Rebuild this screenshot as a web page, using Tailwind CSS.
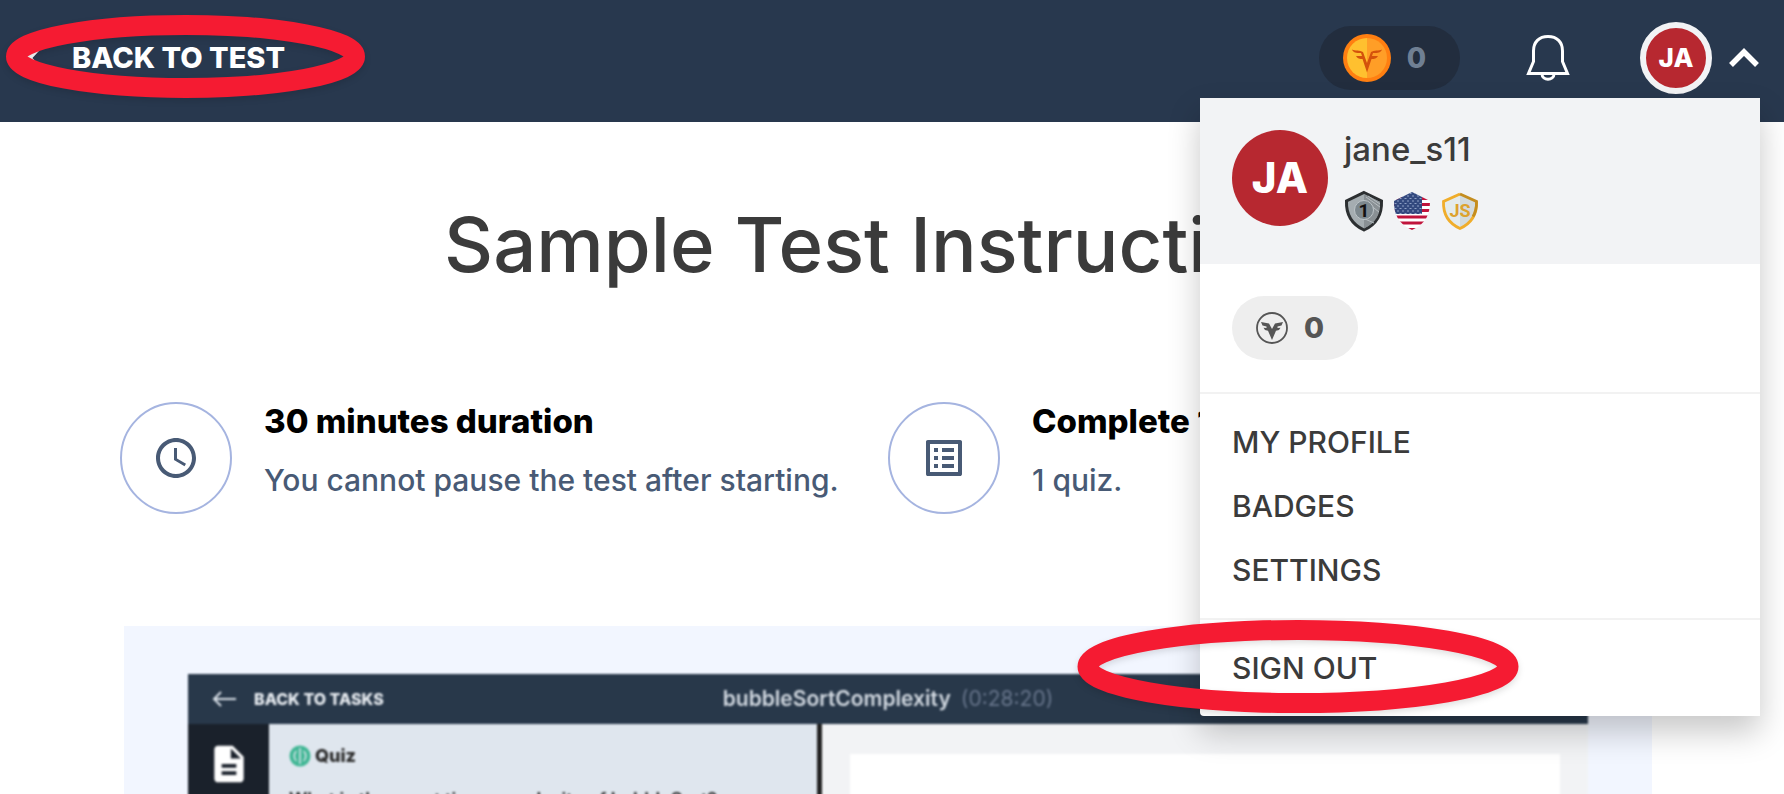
<!DOCTYPE html>
<html lang="en">
<head>
<meta charset="utf-8">
<title>Sample Test Instructions</title>
<script src="https://cdn.jsdelivr.net/npm/@tailwindcss/browser@4"></script>
</head>
<body class="relative h-screen overflow-hidden bg-white font-['Inter','Liberation_Sans',sans-serif] text-[#3b3b3b]">

<header class="relative bg-[#28384e] pb-1.5">
  <div class="flex h-29 items-center justify-between pl-6 pr-6">
    <a href="#" class="flex items-center gap-7 text-[29px] leading-8 font-extrabold text-white">
      <svg class="h-8 w-5" viewBox="0 0 20 32" fill="none" stroke="#fff" stroke-width="5"><path d="M17 3 5 16l12 13"/></svg>
      BACK TO TEST
    </a>
    <div class="flex items-center">
      <div class="flex h-16 items-center gap-4 rounded-full bg-[#222d3e] pl-6 pr-8.5">
        <svg class="size-12" viewBox="0 0 48 48">
          <circle cx="24" cy="24" r="24" fill="#ff7f11"/>
          <path d="M24 4a20 20 0 0 0 0 40z" fill="#ffc02f"/>
          <path d="M24 4a20 20 0 0 1 0 40z" fill="#ff9e27"/>
          <path d="M9 15.500C12 17 17 16 20 18l4 11 4-11c3-2 8-1 11-2.500-1 3-4 3.500-9 3.500l-1 3h6c-1 2.500-4 3-6.500 3L24 38.500 19.500 25c-2.500 0-5.500-.5-6.500-3h6l-1-3c-5 0-8-.5-9-3.500z" fill="#d4520c"/>
        </svg>
        <span class="text-[28px] leading-8 font-extrabold text-[#6f7f93]">0</span>
      </div>
      <button type="button" aria-label="Notifications" class="ml-16.5">
        <svg class="h-12 w-11" viewBox="0 0 44 48" fill="none" stroke="#fff" stroke-width="3"><path d="M7.500 27.500V17C7.500 8 13 2.500 22 2.500S36.500 8 36.500 17v10.500L41.500 39.500h-39zM16 40c0 7 12 7 12 0"/></svg>
      </button>
      <button type="button" aria-expanded="true" class="ml-17.5 flex items-center gap-4">
        <span class="flex size-18 items-center justify-center rounded-full border-6 border-[#f2f3f5] bg-[#b72830] text-[26px] leading-8 font-extrabold text-white">JA</span>
        <svg class="h-5 w-8" viewBox="0 0 32 20" fill="none" stroke="#fff" stroke-width="5.500"><path d="m3 17 13-13 13 13"/></svg>
      </button>
    </div>
  </div>
</header>

<main class="px-30">
  <h1 class="pt-19 text-center text-[76px] leading-[92px] font-medium">Sample Test Instructions</h1>

  <section class="mr-2 mt-28 grid grid-cols-2">
    <div class="flex gap-8">
      <div class="flex size-28 shrink-0 items-center justify-center rounded-full border-2 border-[#a5b4e0]">
        <svg class="size-12" viewBox="0 0 24 24" fill="#485a75"><path d="M11.990 2C6.470 2 2 6.480 2 12s4.470 10 9.990 10C17.520 22 22 17.520 22 12S17.520 2 11.990 2zM12 20c-4.420 0-8-3.580-8-8s3.580-8 8-8 8 3.580 8 8-3.580 8-8 8zm.5-13H11v6l5.250 3.150.75-1.230-4.500-2.670z"/></svg>
      </div>
      <div>
        <h2 class="text-[33px] leading-9.5 font-extrabold text-black">30 minutes duration</h2>
        <p class="mt-5 text-[30px] leading-10 font-medium text-[#485a75]">You cannot pause the test after starting.</p>
      </div>
    </div>
    <div class="flex gap-8">
      <div class="flex size-28 shrink-0 items-center justify-center rounded-full border-2 border-[#a5b4e0]">
        <svg class="size-12" viewBox="0 0 24 24" fill="#485a75"><path d="M19 5v14H5V5h14m1.100-2H3.900c-.5 0-.9.400-.9.900v16.200c0 .4.400.9.900.9h16.200c.4 0 .9-.5.900-.9V3.900c0-.5-.5-.9-.9-.9zM11 7h6v2h-6V7zm0 4h6v2h-6v-2zm0 4h6v2h-6zM7 7h2v2H7zm0 4h2v2H7zm0 4h2v2H7z"/></svg>
      </div>
      <div>
        <h2 class="text-[33px] leading-9.5 font-extrabold text-black">Complete 1 task</h2>
        <p class="mt-5 text-[30px] leading-10 font-medium text-[#485a75]">1 quiz.</p>
      </div>
    </div>
  </section>

  <section class="ml-1 mr-3 mt-28 bg-[#f2f6ff] px-16 pt-12">
    <div class="bg-[#f2f3f5] blur-[1px]">
      <div class="grid h-12.5 grid-cols-[1fr_auto_1fr] items-center bg-[#28384a] px-6">
        <a href="#" class="flex items-center gap-4.5 text-[16px] leading-6 font-extrabold text-[#e9edf2]">
          <svg class="h-4 w-6" viewBox="0 0 24 16" fill="none" stroke="#d9e0e8" stroke-width="2"><path d="M24 8H2M9 1 2 8l7 7"/></svg>
          BACK TO TASKS
        </a>
        <p class="flex gap-2.5 text-[21px] leading-6 font-semibold text-[#d3dae2]">bubbleSortComplexity <span class="font-normal text-[#66748a]">(0:28:20)</span></p>
      </div>
      <div class="flex h-60">
        <div class="flex w-[81px] justify-center bg-[#1a212b] pt-4.5">
          <svg class="size-11" viewBox="0 0 24 24" fill="#fff"><path d="M14 2H6c-1.100 0-2 .9-2 2v16c0 1.100.9 2 2 2h12c1.100 0 2-.9 2-2V8l-6-6zm2 16H8v-2h8v2zm0-4H8v-2h8v2zm-3-5V3.500L18.500 9H13z"/></svg>
        </div>
        <div class="w-137 bg-[#dfe6ee] px-5 pt-5 text-[#2b2b2b]">
          <div class="flex items-center gap-1">
            <svg class="size-5.5" viewBox="0 0 22 22" fill="none"><circle cx="11" cy="11" r="10.500" fill="#41b795"/><path d="M11 3v16M7.500 6c-3 2-3 8 0 10M14.500 6c3 2 3 8 0 10" stroke="#dfe6ee" stroke-width="1.500"/></svg>
            <span class="text-[18px] leading-6 font-extrabold">Quiz</span>
          </div>
          <p class="mt-5 text-[18px] leading-6 font-semibold whitespace-nowrap">What is the worst time complexity of bubbleSort?</p>
        </div>
        <div class="flex-1 border-l-5 border-[#222] px-7 pt-7.5"><div class="h-full bg-white"></div></div>
      </div>
    </div>
  </section>
</main>

<aside class="absolute top-24.5 right-6 w-140 rounded-bl bg-white shadow-[0_16px_32px_rgba(0,0,0,0.22)]">
  <div class="flex gap-4 bg-[#f2f3f5] px-8 pt-8 pb-8.5">
    <span class="flex size-24 items-center justify-center rounded-full bg-[#b72830] text-[42px] leading-none font-extrabold text-white">JA</span>
    <div class="h-25">
      <p class="text-[33px] leading-9.5 font-medium">jane_s11</p>
      <div class="mt-5.5 flex items-center gap-2">
        <svg class="h-10.5 w-10" viewBox="0 0 40 42">
          <path d="M20 2.500 37.500 11C38 24 33 34 20 40 7 34 2 24 2.500 11z" fill="#a5adb1" stroke="#2c2f31" stroke-width="3"/>
          <path d="M20 4 36 12c.5 12-4 21-16 26.500z" fill="#899094"/>
          <path d="m22 7 14 10M21 11l14 11M21 29l9 4M24 6l12 8" stroke="#b6bdc1"/>
          <circle cx="20" cy="20" r="9.500" fill="#7d888e" stroke="#bcc4c8"/>
          <text x="20" y="27" text-anchor="middle" font-family="Roboto" font-size="19" font-weight="700" fill="#111">1</text>
        </svg>
        <svg class="h-10.5 w-10" viewBox="0 0 40 42">
          <defs>
            <clipPath id="us"><path d="M20 2 38 11C38 24 34 34 20 40 6 34 2 24 2 11z"/></clipPath>
            <pattern id="stars" width="5" height="5" patternUnits="userSpaceOnUse"><path d="M0 1h2M2.500 3.500h2" stroke="#8fa0c6" stroke-width="1"/></pattern>
          </defs>
          <g clip-path="url(#us)">
            <path fill="#fff" d="M0 0h40v42H0z"/>
            <path d="M0 8.500h40M0 14.500h40M0 20.500h40M0 27h40M0 33h40M0 39.500h40" stroke="#c0143c" stroke-width="3"/>
            <path fill="#33497f" d="M0 0h30v24H0z"/><path fill="url(#stars)" d="M0 0h30v24H0z"/>
          </g>
        </svg>
        <svg class="h-10.5 w-10" viewBox="0 0 40 42">
          <path d="M20 3.500 36.500 11C37 24 32 33 20 38.500z" fill="#d3dbdd"/>
          <path d="M20 3.500 3.500 11C3 24 8 33 20 38.500z" fill="#e4ebec"/>
          <path d="M20 4 3.500 11.500C3 24 8 33 20 38.500c12-5.500 17-14.500 16.500-27" fill="none" stroke="#f0ad2b" stroke-width="2.800"/>
          <path d="M20 4 36.500 11.500c.2 6-1 11-3.500 15" fill="none" stroke="#c48d1f" stroke-width="2.800"/>
          <text x="20" y="27" text-anchor="middle" font-family="Roboto" font-size="18" font-weight="700" fill="#dda22d">JS</text>
        </svg>
      </div>
    </div>
  </div>
  <div class="border-b-2 border-[#f2f2f2] p-8">
    <div class="flex h-16 w-fit items-center gap-4 rounded-full bg-[#eee] pl-6 pr-8.5 text-[#555]">
      <svg class="size-8" viewBox="0 0 32 32"><circle cx="16" cy="16" r="15" fill="none" stroke="#555" stroke-width="1.800"/><path d="M5 10l8 1.500 3 5.500 3-5.500L27 10l-1.500 3.500-4 1v1.500l3-.3-1.500 2.300-3 .8L16 28l-4-9.200-3-.8-1.500-2.300 3 .3v-1.500l-4-1z" fill="#555"/></svg>
      <span class="text-[29px] leading-8 font-extrabold">0</span>
    </div>
  </div>
  <nav class="text-[30px] leading-16 font-medium">
    <div class="border-b-2 border-[#f2f2f2] px-8 py-4">
      <a href="#" class="block">MY PROFILE</a>
      <a href="#" class="block">BADGES</a>
      <a href="#" class="block">SETTINGS</a>
    </div>
    <div class="px-8 py-4"><a href="#" class="block">SIGN OUT</a></div>
  </nav>
</aside>

<!-- Callout rings round the back link and the sign-out item -->
<svg class="pointer-events-none absolute top-3 left-1 h-24 w-92 drop-shadow-md" viewBox="4 12 368 96" fill="none" stroke="#f51b32" stroke-width="20"><ellipse cx="185.500" cy="56.500" rx="169.500" ry="31.500"/></svg>
<svg class="pointer-events-none absolute top-154 right-65 h-26 w-113 drop-shadow-md" viewBox="1072 616 452 104" fill="none" stroke="#f51b32" stroke-width="20"><ellipse cx="1298" cy="666.500" rx="210.500" ry="36.500"/></svg>
</body>
</html>
